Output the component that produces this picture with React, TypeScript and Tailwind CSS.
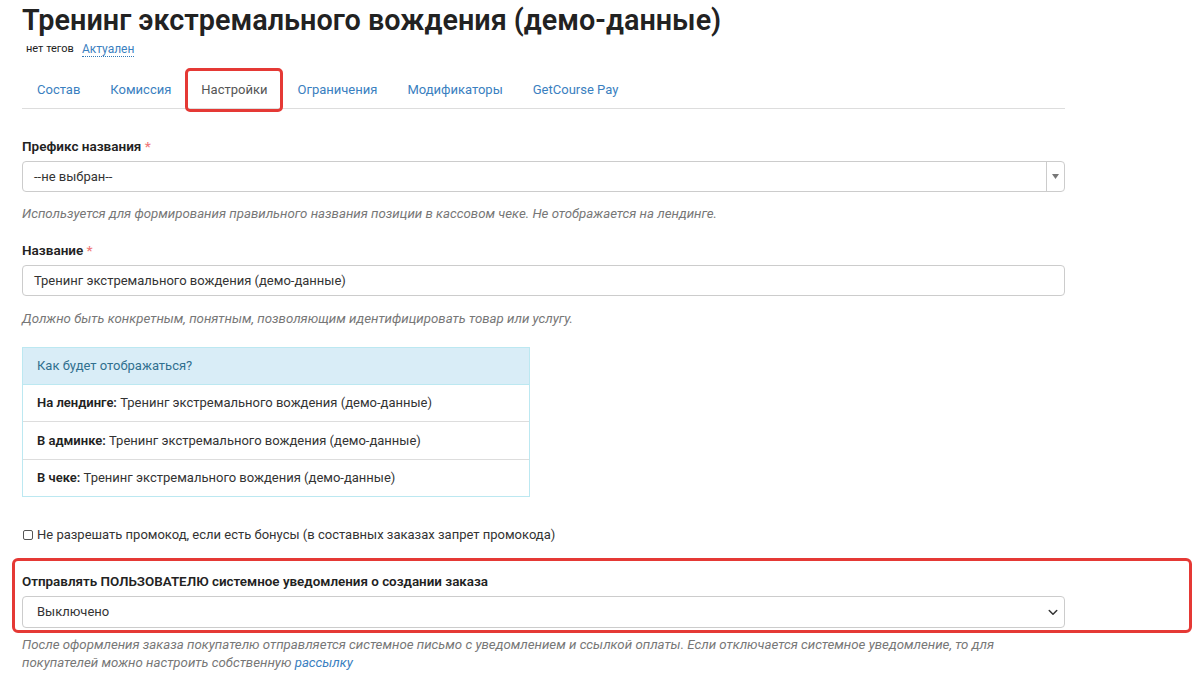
import React from "react";

const tabs = ["Состав", "Комиссия", "Настройки", "Ограничения", "Модификаторы", "GetCourse Pay"];

const rows = [
  { k: "На лендинге:", h: "h-[37px] border-b border-[#ddd]" },
  { k: "В админке:", h: "h-[38px] border-b border-[#ddd]" },
  { k: "В чеке:", h: "h-[36px]" },
];

export default function App() {
  return (
    <div className="min-h-[673px] bg-white text-[#333] overflow-hidden font-[Roboto,sans-serif]">
      <div className="w-[1065px] pl-[22px]">
        <h1 className="pt-[3px] text-[28.8px] font-semibold leading-[34px] text-[#222]">
          Тренинг экстремального вождения (демо-данные)
        </h1>
        <div className="mt-[4px] flex h-[16px] items-center gap-[8px] pl-[4px]">
          <span className="text-[11px] text-[#222]">нет тегов</span>
          <span className="border-b border-dotted border-[#337ab7] text-[12px] leading-[14px] text-[#3a80c0]">Актуален</span>
        </div>
        <ul className="mt-[11px] flex h-[41px] border-b border-[#ddd]">
          {tabs.map((t) => (
            <li key={t} className="relative h-[40px]">
              <span
                className={
                  "block px-[15px] pt-[12px] text-[13px] leading-[20px] " +
                  (t === "Настройки" ? "text-[#555]" : "text-[#3a80c0]")
                }
              >
                {t}
              </span>
              {t === "Настройки" && (
                <span className="absolute -left-px right-0 top-0 -bottom-[4px] rounded-[5px] border-[3px] border-[#e53935]" />
              )}
            </li>
          ))}
        </ul>

        <div className="mt-[27px]">
          <label className="block text-[13.5px] font-semibold leading-[20px] text-[#222]">
            Префикс названия <span className="text-[#ef7b7b]">*</span>
          </label>
          <div className="mt-[5px] flex h-[31px] rounded-[4px] border border-[#ccc]">
            <div className="flex flex-1 items-center pl-[11px] text-[13px] text-[#333]">--не выбран--</div>
            <div className="flex w-[18px] items-center justify-center border-l border-[#ccc]">
              <svg width="7" height="5" viewBox="0 0 7 5">
                <path d="M0 0h7L3.5 5z" fill="#777" />
              </svg>
            </div>
          </div>
          <p className="mt-[13px] text-[13.25px] italic leading-[18px] text-[#777]">
            Используется для формирования правильного названия позиции в кассовом чеке. Не отображается на лендинге.
          </p>
        </div>

        <div className="mt-[17px]">
          <label className="block text-[13.5px] font-semibold leading-[20px] text-[#222]">
            Название <span className="text-[#ef7b7b]">*</span>
          </label>
          <div className="mt-[5px] flex h-[31px] items-center rounded-[4px] border border-[#ccc] pl-[11px] text-[13px] text-[#333]">
            Тренинг экстремального вождения (демо-данные)
          </div>
          <p className="mt-[14px] text-[13.25px] italic leading-[18px] text-[#777]">
            Должно быть конкретным, понятным, позволяющим идентифицировать товар или услугу.
          </p>
        </div>

        <div className="mt-[19px] w-[508px] border border-[#bce8f1] text-[13px]">
          <div className="flex h-[37px] items-center border-b border-[#bce8f1] bg-[#d9edf7] pl-[14px] text-[#31708f]">
            Как будет отображаться?
          </div>
          {rows.map((r) => (
            <div key={r.k} className={"flex items-center pl-[14px] " + r.h}>
              <b className="font-semibold text-[#222]">{r.k}</b>&nbsp;Тренинг экстремального вождения (демо-данные)
            </div>
          ))}
        </div>

        <label className="mt-[28px] flex h-[20px] items-center gap-[4px] text-[13px]">
          <span className="ml-px h-[10px] w-[10px] rounded-[2px] border border-[#555] bg-white" />
          Не разрешать промокод, если есть бонусы (в составных заказах запрет промокода)
        </label>

        <div className="relative mt-[27px]">
          <span className="absolute -left-[10px] -right-[127px] -top-[14px] -bottom-[5px] rounded-[6px] border-[3px] border-[#e53935]" />
          <label className="block text-[13.4px] font-semibold leading-[20px] text-[#222]">
            Отправлять ПОЛЬЗОВАТЕЛЮ системное уведомления о создании заказа
          </label>
          <div className="mt-[4px] flex h-[32px] items-center justify-between rounded-[4px] border border-[#ccc] pl-[14px] pr-[5px] text-[13px] text-[#333]">
            <span>Выключено</span>
            <svg width="12" height="12" viewBox="0 0 16 16">
              <path d="M3 6l5 5 5-5" fill="none" stroke="#333" strokeWidth="2" strokeLinecap="round" strokeLinejoin="round" />
            </svg>
          </div>
        </div>
        <p className="mt-[8px] text-[13.25px] italic leading-[18px] text-[#777]">
          После оформления заказа покупателю отправляется системное письмо с уведомлением и ссылкой оплаты. Если отключается системное уведомление, то для
          <br />
          покупателей можно настроить собственную <span className="text-[#3a80c0]">рассылку</span>
        </p>
      </div>
    </div>
  );
}
